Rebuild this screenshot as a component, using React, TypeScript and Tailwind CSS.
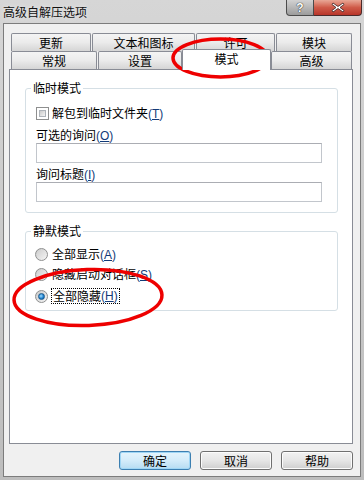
import React from "react";

const font = "font-['Noto_Sans_CJK_SC','Noto_Sans',sans-serif]";

// Underlined access key in parentheses, e.g. (T)
function Key({ k }: { k: string }) {
    return (
        <span className="text-[#123a78] font-['Liberation_Sans','Noto_Sans_CJK_SC',sans-serif]">
            (<span className="underline underline-offset-1">{k}</span>)
        </span>
    );
}

function Tab({ label, w, ml = 0, selected = false }: { label: string; w: number; ml?: number; selected?: boolean }) {
    if (selected) {
        return (
            <div
                style={{ width: w, marginLeft: ml }}
                className="relative z-10 -mb-px flex h-[21px] shrink-0 items-center justify-center rounded-t-[2px] border border-b-0 border-[#898c95] bg-white pb-[2px] text-[12px] leading-none text-black"
            >
                {label}
            </div>
        );
    }
    return (
        <div
            style={{ width: w, marginLeft: ml }}
            className="flex h-full shrink-0 items-center justify-center rounded-t-[2px] border border-b-0 border-[#898c95] bg-linear-to-b from-[#f4f4f4] via-[#ebebeb] to-[#d5d5d5] text-[12px] leading-none text-black"
        >
            {label}
        </div>
    );
}

function Radio({ checked = false }: { checked?: boolean }) {
    return (
        <div className="flex h-[13px] w-[13px] shrink-0 items-center justify-center rounded-full border border-[#8e8f8f] bg-linear-to-br from-[#c9c9c9] to-[#f7f7f7]">
            {checked ? (
                <div className="h-[7px] w-[7px] rounded-full border border-[#1c5a8c] bg-[radial-gradient(circle_at_40%_40%,#9fdcff,#1a7dcc_60%,#0d4f8f)]" />
            ) : (
                <div className="h-[9px] w-[9px] rounded-full bg-linear-to-br from-[#d0d0d0] to-[#f2f2f2]" />
            )}
        </div>
    );
}

function Button({ label, primary = false }: { label: string; primary?: boolean }) {
    return (
        <button
            className={
                "flex h-[19px] w-[72px] items-center justify-center rounded-[3px] border text-[12px] leading-none text-black " +
                (primary
                    ? "border-[#3c7fb1] bg-linear-to-b from-[#e5f4fc] via-[#d3ecfa] to-[#b6dcf2] shadow-[inset_0_0_0_1px_#9fd6f5]"
                    : "border-[#707070] bg-linear-to-b from-[#f2f2f2] via-[#e6e6e6] to-[#cfcfcf] shadow-[inset_0_0_0_1px_#fcfcfc]")
            }
        >
            {label}
        </button>
    );
}

export default function App() {
    return (
        <div className={`relative flex h-[480px] w-[364px] flex-col overflow-hidden bg-linear-to-b from-[#d6d6d6] to-[#bdbdbd] ${font}`}>
            {/* title bar */}
            <div className="flex h-[23px] shrink-0">
                <span className="ml-[3px] self-center text-[12px] leading-none text-[#111] [text-shadow:0_0_4px_#eeeeee]">高级自解压选项</span>
                <div className="ml-auto mr-[2px] flex h-[16px] self-start">
                    <div className="flex w-[28px] items-center justify-center rounded-bl-[4px] border border-t-0 border-[#4b4b4b] bg-linear-to-b from-[#d2d2d2] to-[#9c9c9c] font-['Liberation_Sans',sans-serif] text-[12px] font-bold leading-[14px] text-white [text-shadow:0_0_1px_#222,0_0_1px_#222]">
                        ?
                    </div>
                    <div className="flex w-[48px] items-center justify-center rounded-br-[4px] border border-l-0 border-t-0 border-[#4b2a2a] bg-linear-to-b from-[#e8a796] via-[#cf5a48] to-[#b8352a]">
                        <svg width="14" height="11" viewBox="0 0 14 11">
                            <path d="M2 1 L7 4.5 L12 1 L13 2.5 L9 5.5 L13 8.5 L12 10 L7 6.5 L2 10 L1 8.5 L5 5.5 L1 2.5 Z" fill="#fff" stroke="#3a2020" strokeWidth="0.8" />
                        </svg>
                    </div>
                </div>
            </div>

            {/* client area */}
            <div className="mx-[3px] flex h-[454px] flex-col border border-[#7c7c7c] bg-[#f0f0f0] pl-[5px] pr-[7px] pt-[9px]">
                {/* tabs row 1 */}
                <div className="flex h-[18px]">
                    <Tab label="更新" w={80} ml={2} />
                    <Tab label="文本和图标" w={103} ml={1} />
                    <Tab label="许可" w={79} ml={1} />
                    <Tab label="模块" w={76} ml={1} />
                </div>
                {/* tabs row 2 */}
                <div className="flex h-[18px] items-end">
                    <Tab label="常规" w={86} ml={2} />
                    <Tab label="设置" w={84} ml={1} />
                    <Tab label="模式" w={89} ml={0} selected />
                    <Tab label="高级" w={81} ml={0} />
                </div>

                {/* tab panel */}
                <div className="flex h-[375px] flex-col border border-[#898c95] bg-white pl-[15px] pr-[14px] text-[12px] leading-none text-black">
                    <fieldset className="mt-[10px] rounded-[3px] border border-[#d5dfe5] pb-[10px] pl-[10px] pr-[15px]">
                        <legend className="-ml-[5px] px-[2px] leading-[16px]">临时模式</legend>
                        <div className="mt-[9px] flex h-[16px] items-center gap-[3px]">
                            <div className="h-[13px] w-[13px] shrink-0 border border-[#8e8f8f] bg-white p-[2px]">
                                <div className="h-full w-full border border-[#aeb3b9] bg-linear-to-br from-[#cbcbcb] to-[#f4f4f4]" />
                            </div>
                            <span>
                                解包到临时文件夹<Key k="T" />
                            </span>
                        </div>
                        <div className="mt-[6px] flex h-[16px] items-center">
                            <span>
                                可选的询问<Key k="O" />
                            </span>
                        </div>
                        <div className="h-[20px] border border-[#c2c6cc] border-t-[#abadb3] bg-white" />
                        <div className="mt-[3px] flex h-[16px] items-center">
                            <span>
                                询问标题<Key k="I" />
                            </span>
                        </div>
                        <div className="h-[20px] border border-[#c2c6cc] border-t-[#abadb3] bg-white" />
                    </fieldset>

                    <fieldset className="mt-[10px] rounded-[3px] border border-[#d5dfe5] pb-[6px] pl-[9px] pr-[15px]">
                        <legend className="-ml-[4px] px-[2px] leading-[16px]">静默模式</legend>
                        <div className="mt-[7px] flex h-[16px] items-center gap-[3px]">
                            <Radio />
                            <span className="ml-[1px]">
                                全部显示<Key k="A" />
                            </span>
                        </div>
                        <div className="mt-[4px] flex h-[16px] items-center gap-[3px]">
                            <Radio />
                            <span className="ml-[1px]">
                                隐藏启动对话框<Key k="S" />
                            </span>
                        </div>
                        <div className="mt-[6px] flex h-[16px] items-center gap-[3px]">
                            <Radio checked />
                            <span className="flex h-[16px] items-center border border-dotted border-black px-px">
                                全部隐藏<Key k="H" />
                            </span>
                        </div>
                    </fieldset>
                </div>

                {/* bottom buttons */}
                <div className="mt-[7px] flex justify-end gap-[9px]">
                    <Button label="确定" primary />
                    <Button label="取消" />
                    <Button label="帮助" />
                </div>
            </div>

            {/* red annotation ellipses */}
            <svg className="pointer-events-none absolute left-0 top-0" width="364" height="480" viewBox="0 0 364 480">
                <ellipse cx="220.5" cy="58" rx="47.5" ry="19" fill="none" stroke="#ee0000" strokeWidth="3.5" />
                <ellipse cx="88" cy="297.5" rx="74" ry="28" fill="none" stroke="#ee0000" strokeWidth="3.5" transform="rotate(-2 88 297.5)" />
            </svg>
        </div>
    );
}
